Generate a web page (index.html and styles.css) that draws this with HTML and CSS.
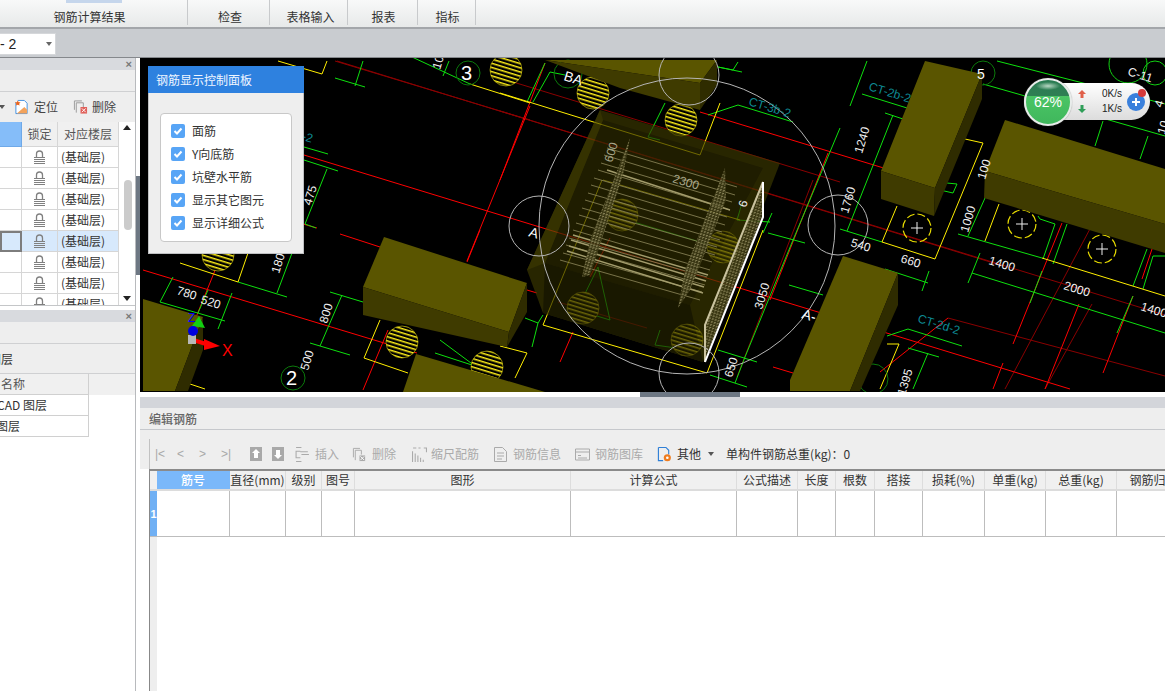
FILE: index.html
```html
<!DOCTYPE html>
<html lang="zh">
<head>
<meta charset="utf-8">
<title>钢筋显示控制面板</title>
<link rel="stylesheet" href="styles.css">
</head>
<body>
<div class="app">
  <header class="ribbon">
    <div class="rgroup rg1"><span class="rmark"></span>钢筋计算结果</div>
    <div class="rgroup rg2">检查</div>
    <div class="rgroup rg3">表格输入</div>
    <div class="rgroup rg4">报表</div>
    <div class="rgroup rg5">指标</div>
  </header>
  <div class="subbar">
    <div class="combo"><span class="combo-text">- 2</span><span class="caret"></span></div>
  </div>
  <div class="main">
    <aside class="side">
      <section class="pane pane-top">
        <div class="pane-bar"><span class="close">×</span></div>
        <div class="pane-row"></div>
        <div class="side-tools">
          <span class="caret small"></span>
          <svg class="ti ti-loc" viewBox="0 0 16 16"><path d="M4 1h7l3 3v11H2V3" fill="#fff" stroke="#3f8fe0"/><path d="M3 15l8-7 3 3v4z" fill="#f3a35c"/><path d="M4 1l1 2 2 0-1.500 1.500.5 2-2-1-2 1 .5-2L1 3h2z" fill="#e8641e"/></svg>
          <span>定位</span>
          <svg class="ti ti-del" viewBox="0 0 16 16"><path d="M1.500 11V1.500h8M3.500 14V3.500H11V8" fill="none" stroke="#999"/><rect x="8" y="8" width="7" height="7" fill="#e0605a"/><path d="M9.500 9.500l4 4M13.500 9.500l-4 4" stroke="#fff"/></svg>
          <span>删除</span>
        </div>
        <div class="ltable">
          <div class="ltable-main">
            <div class="lrow lhead"><span class="lc lc-blue"></span><span class="lc">锁定</span><span class="lc">对应楼层</span></div>
            <div class="lrow"><span class="lc"></span><span class="lc"><svg class="lock" viewBox="0 0 13 15"><path d="M3.500 7V4a3 3 0 0 1 6 0v3" fill="none" stroke="#808080" stroke-width="1.300"/><path d="M1 7.500h11M1 9.500h11M1 11.500h11M1 13.500h11" stroke="#808080"/></svg></span><span class="lc lt">(基础层)</span></div>
            <div class="lrow"><span class="lc"></span><span class="lc"><svg class="lock" viewBox="0 0 13 15"><path d="M3.500 7V4a3 3 0 0 1 6 0v3" fill="none" stroke="#808080" stroke-width="1.300"/><path d="M1 7.500h11M1 9.500h11M1 11.500h11M1 13.500h11" stroke="#808080"/></svg></span><span class="lc lt">(基础层)</span></div>
            <div class="lrow"><span class="lc"></span><span class="lc"><svg class="lock" viewBox="0 0 13 15"><path d="M3.500 7V4a3 3 0 0 1 6 0v3" fill="none" stroke="#808080" stroke-width="1.300"/><path d="M1 7.500h11M1 9.500h11M1 11.500h11M1 13.500h11" stroke="#808080"/></svg></span><span class="lc lt">(基础层)</span></div>
            <div class="lrow"><span class="lc"></span><span class="lc"><svg class="lock" viewBox="0 0 13 15"><path d="M3.500 7V4a3 3 0 0 1 6 0v3" fill="none" stroke="#808080" stroke-width="1.300"/><path d="M1 7.500h11M1 9.500h11M1 11.500h11M1 13.500h11" stroke="#808080"/></svg></span><span class="lc lt">(基础层)</span></div>
            <div class="lrow lsel"><span class="lc lc-cur"></span><span class="lc"><svg class="lock" viewBox="0 0 13 15"><path d="M3.500 7V4a3 3 0 0 1 6 0v3" fill="none" stroke="#808080" stroke-width="1.300"/><path d="M1 7.500h11M1 9.500h11M1 11.500h11M1 13.500h11" stroke="#808080"/></svg></span><span class="lc lt">(基础层)</span></div>
            <div class="lrow"><span class="lc"></span><span class="lc"><svg class="lock" viewBox="0 0 13 15"><path d="M3.500 7V4a3 3 0 0 1 6 0v3" fill="none" stroke="#808080" stroke-width="1.300"/><path d="M1 7.500h11M1 9.500h11M1 11.500h11M1 13.500h11" stroke="#808080"/></svg></span><span class="lc lt">(基础层)</span></div>
            <div class="lrow"><span class="lc"></span><span class="lc"><svg class="lock" viewBox="0 0 13 15"><path d="M3.500 7V4a3 3 0 0 1 6 0v3" fill="none" stroke="#808080" stroke-width="1.300"/><path d="M1 7.500h11M1 9.500h11M1 11.500h11M1 13.500h11" stroke="#808080"/></svg></span><span class="lc lt">(基础层)</span></div>
            <div class="lrow"><span class="lc"></span><span class="lc"><svg class="lock" viewBox="0 0 13 15"><path d="M3.500 7V4a3 3 0 0 1 6 0v3" fill="none" stroke="#808080" stroke-width="1.300"/><path d="M1 7.500h11M1 9.500h11M1 11.500h11M1 13.500h11" stroke="#808080"/></svg></span><span class="lc lt">(基础层)</span></div>
          </div>
          <div class="sb">
            <span class="sb-up"></span>
            <span class="sb-thumb"></span>
            <span class="sb-down"></span>
          </div>
        </div>
      </section>
      <section class="pane pane-bottom">
        <div class="pane-bar"><span class="close">×</span></div>
        <div class="pane-row"></div>
        <div class="layer-title"><span class="cut">图层</span></div>
        <div class="mrow mhead"><span class="mc">名称</span></div>
        <div class="mrow"><span class="mc"><span class="cut-a">CAD 图层</span></span></div>
        <div class="mrow"><span class="mc"><span class="cut-b">图层</span></span></div>
      </section>
    </aside>
    <div class="vsplit"><span class="vgrip"></span></div>
    <div class="work">
      <div class="canvas">
        <svg class="cad" viewBox="140 58 1025 334" width="1025" height="334">
          <defs>
            <pattern id="hatch" width="4" height="4" patternUnits="userSpaceOnUse" patternTransform="rotate(17)">
              <rect width="4" height="4" fill="#000"/><rect width="4" height="1.500" fill="#ffef1a"/>
            </pattern>
            <pattern id="mesh" width="3" height="3" patternUnits="userSpaceOnUse" patternTransform="rotate(17)">
              <rect width="3" height="3" fill="#3b3814"/><rect width="2" height="1" fill="#9a9468"/><rect width="1" height="2" fill="#8a8458"/>
            </pattern>
          </defs>
          <rect x="140" y="58" width="1025" height="334" fill="#000"/>

          <path class="dr" d="M337 61L1000 265M500 78L840 182M500 111L1165 315M335 61L530 120M948 318L1165 376M558 302L647 328M813 180L737 377M1005 389L1100 210M1092 304L1045 389"/>
          <path class="r" d="M700 112L900 173M304 155L1070 389M143 270L417 353M340 234L380 247M303 224L317 228M530 106L467 261M545 63L500 180M828 153L770 300M480 230L467 262M388 330L363 390M1062 223L1013 344M1003 363L993 389M1079 304L1045 389M1133 296L1103 373M1142 279L1152 249M218 263L190 332M610 238L590 277M573 332L560 362M773 367L793 373M527 290L537 293M948 318L880 372"/>
          <path class="g" d="M335 78L365 87M363 61L355 86M397 50L470 84M449 61L443 76M304 147L328 154M304 160L338 171M327 169L305 224L316 228M160 302L225 321M173 277L160 302M208 290L198 313M232 293L218 329M238 282L287 297M277 293L292 253M330 292L363 302M342 295L320 346M310 343L350 355M435 353L475 366L440 340M545 63L527 102M550 72L533 102M550 72L565 75M648 137L665 103M648 137L660 140M708 115L738 105L793 122M733 70L718 67L742 72M738 62L733 70M840 128L793 240L745 357L735 383M768 233L805 243M789 285L823 295M718 350L757 362M710 375L747 387M772 213L763 233M742 203L737 220L770 222M867 61L850 106M893 115L847 231M885 113L903 119M862 94L907 108M840 229L882 242M885 269L928 283M929 271L922 291M985 198L968 236M958 234L1042 258M1038 216L1040 219L1055 224L1043 259M1067 224L1053 264M972 273L1165 333M980 253L968 283M1042 271L1030 303M1133 296L1117 333M908 329L962 346M887 336L908 329M908 348L939 357M928 353L913 389M1133 286L1147 249M1143 289L1153 256L1165 256M997 61L1165 104M983 84L1165 136M1103 121L1095 146M1148 136L1140 159M947 183L957 184L953 193L940 190M617 217L727 250M598 267L577 310L610 320L598 267M525 318L538 323L543 315M532 347L538 323M660 330L655 345L690 350"/>
          <path class="y" d="M278 61L322 74L327 61M470 84L530 103M500 93L700 155L720 103M180 263L238 282L248 253M380 320L364 358L408 373M190 384L205 389M763 230L707 373L543 325L602 180M603 180L740 220M515 378L527 353L500 346M882 242L935 259L983 143L965 139M897 206L882 242M999 204L985 241M1042 258L1165 296M887 344L899 344L880 389"/>
          <circle class="dg" cx="468" cy="73" r="12"/>
          <circle class="dg" cx="293" cy="378" r="12"/>
          <circle class="dg" cx="983" cy="73" r="12"/>
          <circle class="dg" cx="873" cy="379" r="15"/>
          <circle class="dg" cx="568" cy="74" r="14"/>
          <circle class="gc" cx="1128" cy="64" r="19"/>
          <circle class="gc" cx="1155" cy="73" r="12"/>
          <g class="hatch">
            <circle cx="506" cy="70" r="16"/><circle cx="593" cy="93" r="16"/><circle cx="681" cy="120" r="16"/>
            <circle cx="622" cy="215" r="16"/><circle cx="723" cy="247" r="16"/><circle cx="583" cy="308" r="16"/>
            <circle cx="687" cy="340" r="16"/><circle cx="402" cy="342" r="16"/><circle cx="487" cy="367" r="16"/>
            <circle cx="218" cy="255" r="16"/>
          </g>
          <g class="dash">
            <circle cx="917" cy="228" r="14"/><path d="M911 228h12M917 222v12"/>
            <circle cx="1022" cy="224" r="14"/><path d="M1016 224h12M1022 218v12"/>
            <circle cx="1102" cy="249" r="14"/><path d="M1096 249h12M1102 243v12"/>
          </g>

          <g class="found">
            <polygon class="f1" points="600,110 780,163 703,362 543,313 527,270"/>
            <polygon class="f2" points="603,120 763,168 690,305 545,263"/>
            <polygon class="f3" points="600,110 603,120 545,263 527,270"/>
            <polygon class="f4" points="545,263 690,305 703,362 543,313"/>
          </g>

          <polygon class="b-top" points="545,60 717,60 700,83"/>
          <polygon class="b-side" points="717,60 717,85 700,110 700,83"/>
          <polygon class="b-front" points="545,60 700,83 700,110 620,88"/>
          <polygon class="b-top" points="925,61 982,74 935,188 881,171"/>
          <polygon class="b-front" points="881,171 935,188 934,216 881,199"/>
          <polygon class="b-side" points="982,74 982,99 934,216 935,188"/>
          <polygon class="b-top" points="1005,120 1165,169 1165,224 985,171"/>
          <polygon class="b-front" points="985,171 1165,224 1165,253 984,198"/>
          <polygon class="b-top" points="843,256 898,273 850,391 790,391 790,380"/>
          <polygon class="b-side" points="898,273 898,305 860,391 850,391"/>
          <polygon class="b-top" points="384,237 527,283 509,332 363,287"/>
          <polygon class="b-front" points="363,287 509,332 507,347 363,315"/>
          <polygon class="b-side" points="527,283 527,312 507,347 509,332"/>
          <polygon class="b-top" points="416,354 545,392 403,392"/>
          <polygon class="b-top" points="143,299 203,317 175,391 143,391"/>
          <polygon class="b-side" points="203,317 203,350 188,391 175,391"/>

          <path class="rebar" d="M607 148L737 187M604 155L735 195M601 163L732 202M598 170L730 210M594 178L727 217M591 185L725 225M588 193L722 232M585 200L720 240M582 208L717 247M579 215L715 255M576 223L712 262M573 230L710 270M569 238L707 277M566 245L705 285M563 253L702 292M560 260L700 300"/>
          <path class="rebar thick" d="M607 170L730 210M573 235L708 275M571 240L706 281M569 246L704 287M567 251L703 293"/>
          <polygon class="mesh" points="630,138 623,175 590,275 582,277 590,240"/>
          <polygon class="mesh" points="725,168 726,200 690,290 678,308 685,270"/>
          <polygon class="mesh" points="763,182 763,217 705,362 705,325"/>
          <path class="frame-a" d="M763 182L705 325V362"/>
          <path class="frame-b" d="M763 182V217L705 362"/>

          <g class="bigc">
            <circle cx="687" cy="226" r="148"/>
            <circle cx="539" cy="226" r="30"/>
            <circle cx="689" cy="75" r="30"/>
            <circle cx="838" cy="225" r="30"/>
            <circle cx="689" cy="373" r="30"/>
          </g>

          <g class="dim">
            <text transform="translate(176 294) rotate(17)">780</text>
            <text transform="translate(200 303) rotate(17)">520</text>
            <text transform="translate(279 274) rotate(-73)">1800</text>
            <text transform="translate(327 324) rotate(-73)">800</text>
            <text transform="translate(308 371) rotate(-73)">500</text>
            <text transform="translate(440 70) rotate(-73)">10</text>
            <text transform="translate(862 154) rotate(-73)">1240</text>
            <text transform="translate(848 214) rotate(-73)">1760</text>
            <text transform="translate(968 233) rotate(-73)">1000</text>
            <text transform="translate(985 180) rotate(-73)">100</text>
            <text transform="translate(905 396) rotate(-73)">1395</text>
            <text transform="translate(850 246) rotate(17)">540</text>
            <text transform="translate(900 262) rotate(17)">660</text>
            <text transform="translate(988 264) rotate(17)">1400</text>
            <text transform="translate(1063 289) rotate(17)">2000</text>
            <text transform="translate(1140 310) rotate(17)">1400</text>
            <text transform="translate(762 310) rotate(-73)">3050</text>
            <text transform="translate(732 378) rotate(-73)">650</text>
            <text class="dim2" transform="translate(672 182) rotate(17)">2300</text>
            <text class="dim2" transform="translate(612 163) rotate(-73)">600</text>
            <text transform="translate(746 208) rotate(-73)">6</text>
            <text transform="translate(1127 75) rotate(17)">C-11</text>
            <text transform="translate(1162 108) rotate(-73)">4</text>
            <text transform="translate(1165 135) rotate(-73)">10</text>
            <text class="dim3" transform="translate(461 80)">3</text>
            <text class="dim3" transform="translate(286 385)">2</text>
            <text class="dim4" transform="translate(977 79)">5</text>
            <text class="dim4" transform="translate(563 80) rotate(17)">BA</text>
            <text class="dim4" transform="translate(528 236) rotate(17)">A</text>
            <text class="dim4" transform="translate(801 318) rotate(17)">A-</text>
            <text transform="translate(311 206) rotate(-73)">475</text>
          </g>
          <g class="ct">
            <text transform="translate(748 105) rotate(17)">CT-3b-2</text>
            <text transform="translate(868 90) rotate(17)">CT-2b-2</text>
            <text transform="translate(917 322) rotate(17)">CT-2d-2</text>
            <text transform="translate(270 130) rotate(17)">CT-2d-2</text>
          </g>

          <g>
            <path class="ax-x" d="M190 339L206 344"/>
            <polygon class="ax-xh" points="204,339 220,346 204,350"/>
            <text class="ax-t" x="222" y="356">X</text>
            <polygon class="ax-z" points="199,316 205,328 192,326"/>
            <rect class="ax-b" x="188" y="335" width="8" height="9"/>
            <circle class="ax-c" cx="193" cy="331" r="5"/>
            <text class="ax-tz" x="188" y="322">Z</text>
          </g>
        </svg>

        <div class="ctl">
          <div class="ctl-head">钢筋显示控制面板</div>
          <div class="ctl-body">
            <ul class="ctl-list">
              <li><span class="chk"><svg viewBox="0 0 14 14"><path d="M3.500 7l2.500 2.500 4.500-5" fill="none" stroke="#fff" stroke-width="2"/></svg></span>面筋</li>
              <li><span class="chk"><svg viewBox="0 0 14 14"><path d="M3.500 7l2.500 2.500 4.500-5" fill="none" stroke="#fff" stroke-width="2"/></svg></span>Y向底筋</li>
              <li><span class="chk"><svg viewBox="0 0 14 14"><path d="M3.500 7l2.500 2.500 4.500-5" fill="none" stroke="#fff" stroke-width="2"/></svg></span>坑壁水平筋</li>
              <li><span class="chk"><svg viewBox="0 0 14 14"><path d="M3.500 7l2.500 2.500 4.500-5" fill="none" stroke="#fff" stroke-width="2"/></svg></span>显示其它图元</li>
              <li><span class="chk"><svg viewBox="0 0 14 14"><path d="M3.500 7l2.500 2.500 4.500-5" fill="none" stroke="#fff" stroke-width="2"/></svg></span>显示详细公式</li>
            </ul>
          </div>
        </div>

        <div class="net">
          <div class="net-ball"><span>62%</span></div>
          <div class="net-arrows">
            <svg viewBox="0 0 8 8"><path d="M4 0l4 4H5.500v4h-3V4H0z" fill="#e0604a"/></svg>
            <svg viewBox="0 0 8 8"><path d="M4 8l4-4H5.500V0h-3v4H0z" fill="#2f9e58"/></svg>
          </div>
          <div class="net-speed"><span>0K/s</span><span>1K/s</span></div>
          <div class="net-plus"><svg viewBox="0 0 18 18"><circle cx="9" cy="9" r="9" fill="#3a80dc"/><path d="M9 5v8M5 9h8" stroke="#fff" stroke-width="2"/></svg><span class="net-dot"></span></div>
        </div>
      </div>
      <div class="hsplit"><span class="hgrip"></span></div>
      <div class="ed-bar"></div>
      <div class="ed-title">编辑钢筋</div>
      <div class="ed-tools">
        <div class="ed-tools-in">
          <span class="nav">|&lt;</span><span class="nav">&lt;</span><span class="nav">&gt;</span><span class="nav">&gt;|</span>
          <svg class="t12 t-up" viewBox="0 0 12 14"><rect width="12" height="14" fill="#a9a9a9"/><path d="M6 2l4 4H8v5H4V6H2z" fill="#fff"/></svg>
          <svg class="t12 t-dn" viewBox="0 0 12 14"><rect width="12" height="14" fill="#a9a9a9"/><path d="M6 12l4-4H8V3H4v5H2z" fill="#fff"/></svg>
          <span class="tool t-ins dis"><svg viewBox="0 0 14 14"><path d="M1 .500h5M1 13.500h5M5 4H1v6h4M6 7h7M5 4.500h7" fill="none" stroke="#aaa"/></svg>插入</span>
          <span class="tool t-del dis"><svg viewBox="0 0 16 16"><path d="M1.500 11V1.500h7M3.500 14V3.500H10V8" fill="none" stroke="#aaa"/><rect x="8" y="9" width="6" height="6" fill="#aaa"/><path d="M9 10l4 4M13 10l-4 4" stroke="#fff"/></svg>删除</span>
          <span class="tool t-scale dis"><svg viewBox="0 0 14 14"><path d="M.500 14V4M3 14V6M5.500 14V8M8 14V10M10.500 14V12M1 1h3M6 1h2M11 1h3M13.500 1v4" fill="none" stroke="#aaa"/></svg>缩尺配筋</span>
          <span class="tool t-info dis"><svg viewBox="0 0 14 15"><path d="M1 .500h8l4 4V14.500H1zM3.500 6h7M3.500 9h7M3.500 12h5" fill="none" stroke="#aaa"/></svg>钢筋信息</span>
          <span class="tool t-lib dis"><svg viewBox="0 0 15 14"><path d="M.500 1.500h14v11H.500zM1 4.500h13M3 8h3M3 10.500h9" fill="none" stroke="#aaa"/></svg>钢筋图库</span>
          <span class="tool t-other"><svg viewBox="0 0 15 16"><path d="M1 .500h8l3 3V8M6 14.500H1V.500" fill="none" stroke="#2f7fd6" stroke-width="1.200"/><circle cx="10.500" cy="11.500" r="3.800" fill="#ef7c1e"/><circle cx="10.500" cy="11.500" r="1.400" fill="#fff"/></svg>其他</span>
          <span class="caret dark"></span>
          <span class="total">单构件钢筋总重(kg)：0</span>
        </div>
      </div>
      <div class="grid">
        <div class="grow ghead">
          <span class="gc0"></span><span class="gcell gblue">筋号</span><span class="gcell">直径(mm)</span><span class="gcell">级别</span><span class="gcell">图号</span><span class="gcell">图形</span><span class="gcell">计算公式</span><span class="gcell">公式描述</span><span class="gcell">长度</span><span class="gcell">根数</span><span class="gcell">搭接</span><span class="gcell">损耗(%)</span><span class="gcell">单重(kg)</span><span class="gcell">总重(kg)</span><span class="gcell">钢筋归属</span>
        </div>
        <div class="grow gbody">
          <span class="gc0 gnum">1</span><span class="gcell"></span><span class="gcell"></span><span class="gcell"></span><span class="gcell"></span><span class="gcell"></span><span class="gcell"></span><span class="gcell"></span><span class="gcell"></span><span class="gcell"></span><span class="gcell"></span><span class="gcell"></span><span class="gcell"></span><span class="gcell"></span><span class="gcell"></span>
        </div>
        <div class="gempty"><span class="gc0-fill"></span></div>
      </div>
    </div>
  </div>
</div>
</body>
</html>
```
FILE: styles.css
```css
* { box-sizing: border-box; }
html, body { margin: 0; height: 100%; }
body { width: 1165px; height: 691px; overflow: hidden; background: #fff; font: 12px/1 "Noto Sans CJK SC", "Noto Sans", sans-serif; color: #333; }
.app { display: flex; flex-direction: column; height: 691px; }

.ribbon { flex: none; height: 29px; display: flex; background: linear-gradient(#f8f9f9, #e7e9e9); border-bottom: 2px solid #a3a6aa; }
.rgroup { position: relative; display: flex; align-items: flex-end; justify-content: center; padding-bottom: 2px; height: 25px; border-right: 1px solid #c8cacc; color: #333; }
.rmark { position: absolute; top: 0; left: 66px; width: 56px; height: 3px; background: #c5d6ec; }
.rg1 { width: 188px; padding-left: 2px; padding-right: 10px; }
.rg2 { width: 82px; padding-left: 3px; }
.rg3 { width: 78px; padding-left: 4px; }
.rg4 { width: 70px; padding-left: 2px; }
.rg5 { width: 58px; padding-left: 2px; }

.subbar { flex: none; height: 29px; background: #c9ccd0; border-bottom: 1px solid #85888c; padding-top: 4px; }
.combo { width: 56px; height: 22px; background: #fff; border: 1px solid #d5d7da; border-left: 0; display: flex; align-items: center; justify-content: space-between; padding-right: 3px; }
.combo-text { font: 14px "Liberation Sans", sans-serif; color: #222; }
.caret { width: 0; height: 0; border: 3.500px solid transparent; border-top: 4px solid #666; border-bottom: 0; }

.main { flex: 1; display: flex; min-height: 0; }
.side { flex: none; width: 136px; display: flex; flex-direction: column; background: #fff; border-right: 1px solid #b8babd; }
.pane-bar { height: 12px; background: #d8dade; display: flex; justify-content: flex-end; padding-right: 3px; }
.close { font: bold 11px/12px "Liberation Sans", sans-serif; color: #777; }
.pane-row { height: 22px; background: #eeeeee; border-bottom: 1px solid #cfd0d2; }
.pane-top { height: 248px; display: flex; flex-direction: column; border-bottom: 1px solid #c4c6c8; }
.pane-bottom { margin-top: 4px; flex: 1; }

.side-tools { flex: none; height: 30px; background: #eee; display: flex; align-items: center; border-bottom: 1px solid #eee; color: #444; }
.caret.small { margin-left: -1px; border-top-color: #555; }
.ti { width: 15px; height: 16px; }
.ti-loc { margin-left: 9px; margin-right: 5px; }
.ti-del { margin-left: 15px; margin-right: 4px; }

.ltable { flex: 1; display: flex; min-height: 0; overflow: hidden; }
.ltable-main { flex: none; width: 119px; }
.lrow { display: grid; grid-template-columns: 22px 36px 61px; height: 21px; }
.lc { display: flex; align-items: center; justify-content: center; border-right: 1px solid #d6d6d6; border-bottom: 1px solid #d6d6d6; color: #333; }
.lhead { height: 25px; }
.lhead .lc { background: #f0f0f0; color: #555; }
.lhead .lc-blue { background: #85bdf9; border-color: #6fa9e8; }
.lt { justify-content: flex-start; padding-left: 3px; }
.lsel .lc { background: #d7e9fc; }
.lsel .lc-cur { border: 2px solid #7d7d7d; }
.lock { width: 13px; height: 15px; }
.sb { flex: none; width: 16px; background: #fff; display: flex; flex-direction: column; align-items: center; padding: 3px 0 4px; }
.sb-up { width: 0; height: 0; border: 4px solid transparent; border-top: 0; border-bottom: 5px solid #222; }
.sb-thumb { width: 8px; height: 50px; margin-top: 50px; margin-left: 1px; background: #cbcbcb; border-radius: 4px; }
.sb-down { width: 0; height: 0; border: 4px solid transparent; border-bottom: 0; border-top: 5px solid #222; margin-top: auto; }

.layer-title { height: 30px; background: #eee; border-bottom: 1px solid #cfd0d2; display: flex; align-items: center; overflow: hidden; color: #444; }
.cut { display: block; margin-left: -11px; white-space: nowrap; color: #333; }
.cut-a { display: block; margin-left: -3px; white-space: nowrap; color: #333; }
.cut-b { display: block; margin-left: -4px; white-space: nowrap; color: #333; }
.mrow { height: 21px; width: 89px; display: flex; overflow: hidden; }
.mc { flex: 1; display: flex; align-items: center; padding-left: 1px; border-right: 1px solid #d0d0d0; border-bottom: 1px solid #d0d0d0; overflow: hidden; }
.mhead { width: 135px; background: #f0f0f0; }
.mhead .mc { flex: none; width: 89px; color: #555; }
.mrow:not(.mhead) .mc { padding-left: 0; }

.vsplit { flex: none; width: 4px; background: #fff; }
.vgrip { display: block; width: 4px; height: 99px; margin-top: 118px; background: #6d7783; }

.work { flex: 1; min-width: 0; display: flex; flex-direction: column; background: #fff; overflow: hidden; }
.canvas { position: relative; flex: none; height: 334px; background: #000; overflow: hidden; }
.cad { display: block; }
.dr, .r, .g, .y, .rebar, .frame-a, .frame-b { fill: none; }
.r { stroke: #f00; stroke-width: 1; }
.dr { stroke: #8a0000; stroke-width: 1; }
.g { stroke: #0ee00e; stroke-width: 1; }
.y { stroke: #ffee00; stroke-width: 1; }
.dg { fill: none; stroke: #0b7a0b; stroke-width: 1; }
.gc { fill: none; stroke: #12d012; stroke-width: 1; }
.hatch circle { fill: url(#hatch); stroke: #d8cc10; stroke-width: .6; }
.dash { fill: none; stroke: #e8dc00; stroke-width: 1.200; }
.dash circle { stroke-dasharray: 8 3; }
.dash path { stroke: #eee; stroke-width: 1; }
.found { opacity: .68; }
.f1 { fill: #3c3900; }
.f2 { fill: #2e2b00; }
.f3 { fill: #4f4b00; }
.f4 { fill: #262400; }
.b-top { fill: #5a5500; }
.b-front { fill: #3f3b00; }
.b-side { fill: #2f2c00; }
.rebar { stroke: #8f895c; stroke-width: .8; }
.rebar.thick { stroke: #a39c6c; stroke-width: 1.400; }
.mesh { fill: url(#mesh); opacity: .85; }
.frame-a { stroke: #c9c29e; stroke-width: 2; }
.frame-b { stroke: #fff; stroke-width: 2; }
.bigc circle { fill: none; stroke: #b5b5b5; stroke-width: 1; }
.dim text { font: 12px "Liberation Sans", sans-serif; fill: #f0f0f0; }
.dim text.dim2 { fill: #a8a68a; }
.dim text.dim3 { font-size: 20px; fill: #fff; }
.dim text.dim4 { font-size: 14px; fill: #fff; }
.ct text { font: 12px "Liberation Sans", sans-serif; fill: #0e8a94; }
.ax-x { stroke: #f00; stroke-width: 4; fill: none; }
.ax-xh { fill: #f00; }
.ax-t { font: 16px "Liberation Sans", sans-serif; fill: #f00; }
.ax-z { fill: #12d012; }
.ax-b { fill: #b8b8b8; }
.ax-c { fill: #0000e0; }
.ax-tz { font: 12px "Liberation Sans", sans-serif; fill: #0000ff; }

.ctl { position: absolute; left: 8px; top: 8px; width: 156px; height: 188px; background: #eeeeee; border: 1px solid #bfc0c2; border-top: 0; }
.ctl-head { height: 27px; margin: 0 -1px; background: #2e81df; color: #f0f6ff; padding: 0 8px; line-height: 27px; }
.ctl-body { padding: 20px 11px 0; }
.ctl-list { list-style: none; margin: 0; padding: 5px 0 0 10px; height: 129px; background: #fff; border: 1px solid #c8c8c8; border-radius: 4px; }
.ctl-list li { height: 23px; display: flex; align-items: center; color: #333; }
.chk { width: 14px; height: 14px; margin-right: 7px; background: #58a5f6; border-radius: 2px; }
.chk svg { display: block; width: 14px; height: 14px; }

.net { position: absolute; left: 884px; top: 25px; width: 126px; height: 37px; display: flex; align-items: center; background: linear-gradient(#ffffff, #dcdcdc); border-radius: 19px; }
.net-ball { flex: none; width: 48px; height: 48px; border-radius: 50%; border: 2px solid #e8ecea; box-shadow: 0 0 1px #666; background: radial-gradient(ellipse 12px 4px at 50% 6px, #b8d8c4, transparent), linear-gradient(#2a7c52 0, #2f7f54 36%, #4bc565 36%, #3fb75c 100%); color: #fff; font: 14px/44px "Liberation Sans", sans-serif; text-align: center; }
.net-arrows { flex: none; display: flex; flex-direction: column; gap: 7px; margin-left: 6px; }
.net-arrows svg { display: block; width: 8px; height: 8px; }
.net-speed { flex: none; width: 36px; display: flex; flex-direction: column; align-items: flex-end; gap: 5px; font: 10px/10px "Liberation Sans", sans-serif; color: #222; }
.net-plus { position: relative; flex: none; width: 18px; height: 18px; margin-left: 5px; }
.net-plus svg { display: block; width: 18px; height: 18px; }
.net-dot { position: absolute; top: -4px; right: -1px; width: 8px; height: 8px; border-radius: 50%; background: #d63a3a; }

.hsplit { flex: none; height: 5px; background: #fff; }
.hgrip { display: block; width: 100px; height: 5px; margin-left: 500px; background: #6d7783; }
.ed-bar { flex: none; height: 11px; background: #d3d5da; }
.ed-title { flex: none; height: 22px; padding: 0 9px; line-height: 21px; background: #eee; border-bottom: 1px solid #c6c8cc; color: #666; font-weight: 500; }
.ed-tools { flex: none; height: 39px; background: #eee; padding: 9px 0 0 9px; }
.ed-tools-in { height: 30px; border-left: 1px solid #c2c2c2; display: flex; align-items: center; padding-left: 5px; color: #aaa; white-space: nowrap; }
.nav { font: 12px "Liberation Sans", sans-serif; color: #a8a8a8; width: 22px; }
.t12 { width: 12px; height: 14px; }
.t-up { margin-left: 7px; }
.t-dn { margin-left: 10px; }
.tool { display: flex; align-items: center; }
.tool svg { width: 15px; height: 15px; margin-right: 5px; }
.dis { color: #aaa; }
.t-ins { margin-left: 11px; }
.t-del { margin-left: 13px; }
.t-scale { margin-left: 16px; }
.t-scale svg { margin-right: 4px; }
.t-info { margin-left: 14px; }
.t-lib { margin-left: 14px; }
.t-other { margin-left: 14px; color: #333; }
.caret.dark { margin-left: 7px; border-top-color: #555; }
.total { margin-left: 12px; color: #333; }

.grid { flex: 1; min-height: 0; margin-left: 9px; border-left: 1px solid #888; border-top: 2px solid #8a8a8a; display: flex; flex-direction: column; overflow: hidden; width: 1016px; }
.grow { flex: none; display: grid; grid-template-columns: 7px 73px 56px 36px 33px 216px 166px 61px 38px 39px 48px 62px 61px 71px 74px; width: 1041px; }
.ghead { height: 20px; background: #f0f0f0; border-bottom: 2px solid #dcdcdc; }
.ghead .gcell { display: flex; align-items: center; justify-content: center; border-right: 1px solid #dddddd; color: #333; }
.ghead .gcell.gblue { background: #7ab8fa; color: #fff; font-weight: 500; border-color: #7ab8fa; }
.gbody { height: 46px; border-bottom: 1px solid #bdbdbd; }
.gbody .gcell { border-right: 1px solid #bdbdbd; }
.gnum { background: #70b0f4; color: #fff; font: bold 11px/46px "Liberation Sans", sans-serif; text-align: center; overflow: hidden; }
.gempty { flex: 1; display: flex; }
.gc0-fill { width: 7px; background: #eeeeee; }
```
